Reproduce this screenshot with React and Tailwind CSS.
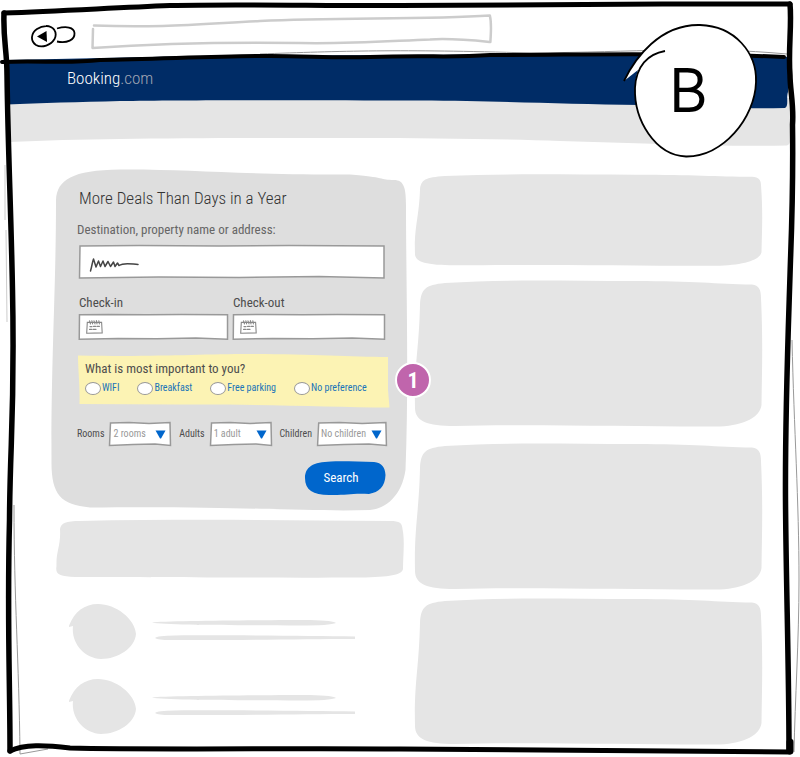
import React, { useState } from 'react';

// --- 1. Sketch helpers ---
// Stretches a hand-drawn shape behind its (relative) parent.
const Sketch = ({ box, children }) => (
  <svg
    viewBox={box}
    preserveAspectRatio="none"
    aria-hidden="true"
    className="pointer-events-none absolute inset-0 h-full w-full overflow-visible"
  >
    {children}
  </svg>
);

const FieldOutline = () => (
  <Sketch box="0 0 306 34">
    <path d="M1 1 L60 0.5 L140 1 L210 0.5 L305 1 L305 33 L240 31.5 L160 32.5 L80 32 L0.5 33 Z" fill="#fff" stroke="#999" strokeWidth="1.5" vectorEffect="non-scaling-stroke" />
  </Sketch>
);

const SelectOutline = () => (
  <Sketch box="0 0 62 24">
    <path d="M1.5 1 L20 0.5 L40 1.5 L61 0.5 L61.5 23.5 L46 22 L24 22.5 L0.5 23.5 Z" fill="#fff" stroke="#999" strokeWidth="1.5" vectorEffect="non-scaling-stroke" />
  </Sketch>
);

const CalendarIcon = () => (
  <svg viewBox="0 0 17 14" aria-hidden="true" className="pointer-events-none absolute top-1.5 left-[7px] z-10 h-[14px] w-[17px]">
    <g fill="none" stroke="#888" strokeWidth="1.1" strokeLinecap="round">
      <path d="M1.3 2.4 L15.6 2.2 L16.2 12.9 L0.7 13.3 Z" />
      <path d="M3.5 0.8 L4.5 4 M5.8 0.7 L6.6 3.9 M8 0.8 L9 3.9 M10.4 0.6 L11 3.9 M12.8 0.7 L13.4 3.9" />
      <path d="M4 6.6 H6 M7.6 6.4 H9.6 M11 6.3 H13.4 M3.6 9.4 H5.6 M7 9.3 H10" strokeWidth="1.3" />
    </g>
  </svg>
);

// --- 2. Data ---
const priorities = ['WIFI', 'Breakfast', 'Free parking', 'No preference'];

const occupancy = [
  { id: 'rooms', label: 'Rooms', width: 'w-[62px]', options: ['2 rooms', '1 room', '3 rooms'] },
  { id: 'adults', label: 'Adults', width: 'w-[62px]', options: ['1 adult', '2 adults', '3 adults'] },
  { id: 'children', label: 'Children', width: 'w-[70px]', options: ['No children', '1 child', '2 children'] },
];

const cards = [
  { id: 'top', height: 'h-[92px]', spacing: '' },
  { id: 'second', height: 'h-[147px]', spacing: 'mt-3.5' },
  { id: 'third', height: 'h-[147px]', spacing: 'mt-4' },
  { id: 'fourth', height: 'h-[147px]', spacing: 'mt-2' },
];

// --- 3. Browser chrome ---
const BrowserBar = () => (
  <div className="flex h-14 items-start pt-4 pl-[31px]">
    <button type="button" aria-label="Back" className="mt-2 h-6 w-[46px] shrink-0">
      <svg viewBox="0 0 46 24" className="h-6 w-[46px]">
        <path d="M23.5 6 C20 1 12 1 6 5 C0 9 -1 17 5 21 C11 24.5 20 21 23.5 15 C27 8 22 2 15 1.8" fill="none" stroke="#000" strokeWidth="1.8" />
        <path d="M6 12.5 L15.5 7 L16 18 Z" fill="#000" />
        <path d="M26 4.5 C35 2 43 3 43.5 9 C44 16 36 19.5 26 17.5" fill="none" stroke="#000" strokeWidth="1.8" />
      </svg>
    </button>
    <div className="relative ml-[15px] h-8 w-[52%]">
      <Sketch box="92 16 400 32">
        <path d="M94 25.5 C160 28 200 24 260 21 C340 17 420 20 490 15.5 C492 24 491 32 490.5 42 C470 40 450 38 430 39.5 C390 41 350 44 300 43 C230 42 150 44 92.5 48 L93 29" fill="none" stroke="#ccc" strokeWidth="2.5" strokeLinejoin="round" strokeLinecap="round" />
      </Sketch>
      <input type="text" aria-label="Address" className="relative mt-2.5 h-4 w-full bg-transparent px-3 text-xs outline-none" />
    </div>
  </div>
);

const SiteHeader = () => (
  <header>
    <div className="relative h-[46px]">
      <Sketch box="0 56 800 46">
        <path d="M8 60 L200 56 L640 54 L790 57 C790 75 788 85 788 92 C786 98 789 106 785 108 C730 109 690 107 640 105 C560 104 500 101 420 100.5 C300 100 180 100 120 101 C80 102 40 103 7 104.5 Z" fill="#002c66" />
      </Sketch>
      <a href="#" className="relative ml-[67px] inline-block pt-2.5 text-[17px] leading-6 font-light text-white">
        Booking<span className="text-[#a0a6b4]">.com</span>
      </a>
    </div>
    <div className="relative -z-10 h-[42px]">
      <Sketch box="0 102 800 42">
        <path d="M11 98 L791 98 C788 110 793 116 790 124 C789 133 793 144 787 145.5 C720 147 640 143 560 141 C500 139 430 138 360 138 C200 138 100 138 9.5 142 Z" fill="#e5e5e5" />
      </Sketch>
    </div>
  </header>
);

// --- 4. Search form ---
const SearchForm = () => {
  const [priority, setPriority] = useState('');

  return (
    <form className="relative flex flex-col pt-4 pr-[22px] pb-[15px] pl-7" onSubmit={(e) => e.preventDefault()}>
      <Sketch box="51 170 356 340">
        <path d="M56 200 C57 180 72 170 120 169.5 C190 169 240 175 350 174.5 C385 177 380 180 394 180 C404 180 406 188 406 205 C406 280 409 380 405.5 470 C402 495 386 509 370 510 C310 512 250 506 90 507.5 C60 505 51 494 51.5 460 C51 360 56 290 56 200 Z" fill="#dedede" />
      </Sketch>

      <h1 className="relative text-[17px] leading-6 font-light text-[#333]">More Deals Than Days in a Year</h1>

      <label htmlFor="destination" className="relative mt-2.5 -ml-0.5 text-[13px] leading-5 text-[#666]">
        Destination, property name or address:
      </label>
      <div className="relative mt-[5px] h-[34px]">
        <FieldOutline />
        <input id="destination" type="text" className="relative h-full w-full bg-transparent px-3 text-[13px] outline-none" />
        <svg viewBox="0 0 50 15" aria-hidden="true" className="pointer-events-none absolute top-3 left-2.5 h-[15px] w-[50px]">
          <path d="M1.5 14 C3 9 3.5 4 4.5 2 L7 10 L9.5 4 L11.5 9.5 L14 4 L16 9.5 L19 4.5 L21.5 9.5 L24.5 5 L26 9.5 L28.5 6 L30 8.5 C35 5 42 7 49 7.5" fill="none" stroke="#444" strokeWidth="1.5" strokeLinecap="round" strokeLinejoin="round" />
        </svg>
      </div>

      <div className="mt-3.5 grid grid-cols-[149fr_152fr] gap-[5px]">
        {['Check-in', 'Check-out'].map((name) => (
          <div key={name}>
            <label htmlFor={name} className="relative block text-[13px] leading-5">{name}</label>
            <div className="relative mt-px h-[26px]">
              <FieldOutline />
              <CalendarIcon />
              <input id={name} type="text" className="relative h-full w-full bg-transparent pr-2 pl-8 text-xs outline-none" />
            </div>
          </div>
        ))}
      </div>

      <div role="radiogroup" aria-labelledby="priority-title" className="relative mt-[15px] -mr-1 h-[52px] pt-1 pl-1.5">
        <Sketch box="79 355 310 52">
          <path d="M78 355.5 C160 357 200 354 250 354 C310 354 350 357 388 357 L388 390 L389.5 407.5 C330 407 260 404 180 404.5 L79.5 404 C80 385 78 370 78 355.5 Z" fill="#fcf3b4" />
        </Sketch>
        <p id="priority-title" className="relative text-[13px] leading-5">What is most important to you?</p>
        <div className="relative flex gap-[18px] text-[10px] leading-[18px] text-[#1a73b8]">
          {priorities.map((p) => (
            <label key={p} className="flex items-center whitespace-nowrap">
              <input
                type="radio"
                name="priority"
                value={p}
                checked={priority === p}
                onChange={() => setPriority(p)}
                className="h-[13px] w-4 shrink-0 appearance-none rounded-[50%] border border-[#999] bg-white checked:bg-[#0066cc]"
              />
              <span className="ml-px">{p}</span>
            </label>
          ))}
        </div>
      </div>

      <div className="relative mt-[15px] -mr-0.5 -ml-0.5 flex justify-between text-[10px] leading-4">
        {occupancy.map((o) => (
          <div key={o.id} className="flex items-center gap-[5px]">
            <label htmlFor={o.id}>{o.label}</label>
            <div className={`relative h-6 ${o.width}`}>
              <SelectOutline />
              <select id={o.id} className="relative h-full w-full appearance-none bg-transparent pl-1 text-[#999] outline-none">
                {o.options.map((opt) => <option key={opt}>{opt}</option>)}
              </select>
              <svg viewBox="0 0 11 9" aria-hidden="true" className="pointer-events-none absolute top-2 right-[5px] h-[9px] w-[11px]">
                <path d="M0.5 0.5 L10.5 0.5 L6 8.5 L5 8.5 Z" fill="#0066cc" />
              </svg>
            </div>
          </div>
        ))}
      </div>

      <button type="submit" className="relative mt-[15px] h-[34px] w-20 self-end pr-2 text-[13px] text-white">
        <Sketch box="304 461 80 34">
          <path d="M304 478 C304 467 312 462 330 461.5 C345 461 360 462 373 462 C381 463 384 467 384.5 475 C384 487 378 492 368 494 C350 493 345 495.5 328 495 C312 495 304 490 304 478 Z" fill="#0066cc" />
        </Sketch>
        <span className="relative">Search</span>
      </button>

      <span className="absolute top-48 -right-6 z-10 flex h-9 w-9 items-center justify-center rounded-full border-2 border-white bg-[#c065ac] text-[22px] font-bold text-white">
        1
      </span>
    </form>
  );
};

// --- 5. Placeholder content ---
const ListItem = () => (
  <li className="flex items-start gap-4">
    <svg viewBox="69 603 67 57" aria-hidden="true" className="h-[57px] w-[67px]">
      <path d="M68.5 627 C74 612 84 604 98 604 C116 604 135 619 136 634 C135 648 118 659 101 659 C84 658 71 643 73 626 Z" fill="#e5e5e5" />
    </svg>
    <svg viewBox="152 618 204 24" aria-hidden="true" className="mt-[15px] h-6 w-[204px]">
      <path d="M152 622.5 C165 620.5 280 620 310 620 Q334 620.5 336 623 Q330 625.5 300 625.5 C240 625 165 625.5 152 622.5 Z" fill="#e5e5e5" />
      <path d="M155 638 Q157 635.5 175 635.5 C230 635 310 636 355 636.5 L355 639 C300 639 230 640.5 170 640 Q158 640 155 638 Z" fill="#e5e5e5" />
    </svg>
  </li>
);

const Card = ({ height, spacing }) => (
  <div className={`relative ${height} ${spacing}`}>
    <Sketch box="0 0 348 147">
      <path d="M5 25 C6 9 10 5 30 3 C90 -1 150 1 220 1 C280 1 300 4 337 4.5 C344 5 346 10 346 18 C348 60 347 90 346.5 125 C345 137 330 145 305 146.5 C230 147 120 144 40 146 C12 146 0 141 0 128 C-1 85 4 70 5 25 Z" fill="#e5e5e5" />
    </Sketch>
  </div>
);

// --- 6. Window outline ---
const WindowFrame = () => (
  <Sketch box="0 0 800 757">
    <g fill="none" stroke="#999" strokeWidth="1">
      <path d="M5 165 L5 220 M6 230 L7 322" stroke="#ccc" />
      <path d="M14 505 C14 600 19 660 20 754 L48 749" />
      <path d="M792 340 C794 430 799 500 799 580 C799 640 795 700 794 752 M260 54 C340 51 400 49 530 53 C640 52 700 46 787 54" />
    </g>
    <g fill="none" stroke="#000" strokeLinecap="round" strokeLinejoin="round">
      <path d="M4 13 C60 11 110 8 170 5.5 C240 4 330 6 400 5.5 C540 4 660 4 790 4" strokeWidth="5" />
      <path d="M4 13 C3 40 7 50 7 75 C8 150 11 210 12.5 290 C15 410 10 440 9.5 520 C7 620 10 680 10 751" strokeWidth="5.5" />
      <path d="M10 751 C24 744 45 745 70 748 C150 750 300 748 400 749 C520 750 640 751 790 752" strokeWidth="5" />
      <path d="M790 4 C792 25 788 50 790 75 C790 90 794 105 792.5 125 C793 160 792 220 790.5 260 C788 340 785 410 785.5 500 C786 580 789 670 789 751" strokeWidth="5.5" />
      <path d="M2 62 C40 60 65 64 100 60 C160 59 220 56 270 56 C310 56 330 58 370 57 C430 55 450 58 490 55 C580 55 680 52 784 57" strokeWidth="4" />
      <path d="M790 742 L790 751" strokeWidth="7" />
    </g>
  </Sketch>
);

const VariantBubble = () => (
  <div className="absolute top-6 right-11 flex h-[134px] w-[132px] items-center justify-center pr-1">
    <Sketch box="624 24 132 134">
      <path d="M624 81 C635 58 660 24 700 25 C735 26 757 53 756 82 C755 118 723 157 686 156.5 C655 155 634 120 635 88 C635 82 636 76 638 70 Z" fill="#fff" />
      <path d="M624 81 C635 58 660 24 700 25 C735 26 757 53 756 82 C755 118 723 157 686 156.5 C655 155 634 120 635 88 C636 66 648 54 665 51" fill="none" stroke="#000" strokeWidth="1.8" />
    </Sketch>
    <span className="relative pb-1.5 font-['Lato',sans-serif] text-6xl font-light text-black [-webkit-text-stroke:2px_black]">B</span>
  </div>
);

export default function App() {
  return (
    <div className="relative isolate overflow-hidden bg-white pb-3 font-['Roboto_Condensed',Roboto,sans-serif] text-[#4d4d4d]">
      <BrowserBar />
      <SiteHeader />

      <main className="grid grid-cols-[minmax(0,356fr)_minmax(0,348fr)] items-start gap-2 pt-[26px] pr-[37px] pl-[51px]">
        <div className="relative z-10">
          <SearchForm />
          <div className="relative mt-2.5 mr-[3px] ml-[5px] h-[58px]">
            <Sketch box="56 519 348 58">
              <path d="M60 528 C61 522 66 520 80 520 C180 518 280 519 390 520 C400 520 402 522 402.5 528 C405 540 403 555 403 568 C402 574 390 576 360 576.5 C270 577 150 576 75 576 C60 575 55 574 56.5 565 C56 550 61 545 60 528 Z" fill="#e5e5e5" />
            </Sketch>
          </div>
          <ul className="mt-[25px] ml-[18px] flex flex-col gap-[18px]">
            <ListItem />
            <ListItem />
          </ul>
        </div>
        <div className="pt-1">
          {cards.map((c) => <Card key={c.id} height={c.height} spacing={c.spacing} />)}
        </div>
      </main>

      <WindowFrame />
      <VariantBubble />
    </div>
  );
}
